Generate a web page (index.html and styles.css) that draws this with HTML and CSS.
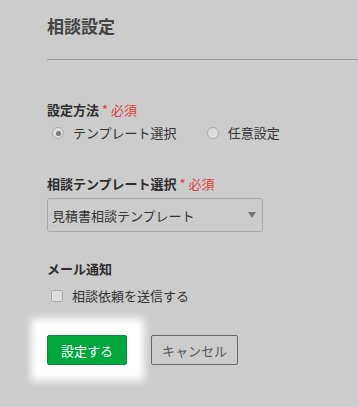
FILE: index.html
```html
<!DOCTYPE html>
<html lang="ja">
<head>
<meta charset="utf-8">
<link rel="stylesheet" href="styles.css">
</head>
<body>
<div class="page">
  <header class="header">
    <h1 class="title">相談設定</h1>
  </header>
  <form class="form">
    <div class="field field-method">
      <div class="label">設定方法 <span class="req">* 必須</span></div>
      <div class="radios">
        <label class="radio-item"><span class="radio checked"></span>テンプレート選択</label>
        <label class="radio-item"><span class="radio"></span>任意設定</label>
      </div>
    </div>
    <div class="field field-template">
      <div class="label">相談テンプレート選択 <span class="req">* 必須</span></div>
      <div class="select">
        <span class="select-text">見積書相談テンプレート</span>
        <span class="select-arrow"></span>
      </div>
    </div>
    <div class="field field-mail">
      <div class="label">メール通知</div>
      <label class="check-item"><span class="checkbox"></span>相談依頼を送信する</label>
    </div>
    <div class="actions">
      <span class="spot"><span class="btn btn-primary">設定する</span></span>
      <span class="btn btn-cancel">キャンセル</span>
    </div>
  </form>
</div>
</body>
</html>
```

FILE: styles.css
```css
html, body {
  margin: 0;
  padding: 0;
  background: #cccccc;
}
body {
  font-family: "Noto Sans CJK JP", "Noto Sans", sans-serif;
  color: #333;
  width: 358px;
  height: 407px;
  overflow: hidden;
}
.header {
  margin-left: 47px;
  height: 59px;
  border-bottom: 1px solid #999;
  box-sizing: content-box;
}
.title {
  margin: 0;
  padding-top: 14px;
  font-size: 17px;
  line-height: 24px;
  font-weight: bold;
  color: #444;
}
.form {
  padding-left: 47px;
}
.label {
  font-size: 13px;
  line-height: 18px;
  font-weight: bold;
  color: #2e2e2e;
}
.req {
  color: #e23b3b;
  font-weight: normal;
}
.field-method {
  margin-top: 41px;
}
.radios {
  display: flex;
  gap: 30px;
  margin-top: 4px;
  padding-left: 5px;
}
.radio-item, .check-item {
  display: flex;
  align-items: center;
  gap: 9px;
  font-size: 13px;
  line-height: 20px;
  color: #333;
}
.radio {
  width: 10px;
  height: 10px;
  border-radius: 50%;
  border: 1px solid #aaa;
  background: #ddd;
  display: flex;
  align-items: center;
  justify-content: center;
}
.radio.checked::after {
  content: "";
  width: 5px;
  height: 5px;
  border-radius: 50%;
  background: #777;
}
.field-template {
  margin-top: 32px;
}
.select {
  margin-top: 5px;
  width: 205px;
  height: 32px;
  border: 1px solid #aaa;
  border-radius: 3px;
  display: flex;
  align-items: center;
  justify-content: space-between;
  padding: 0 5px 0 4px;
  box-sizing: content-box;
}
.select-text {
  font-size: 13px;
  color: #333;
}
.select-arrow {
  width: 0;
  height: 0;
  border-left: 4px solid transparent;
  border-right: 4px solid transparent;
  border-top: 6px solid #777;
  margin-right: 1px;
}
.field-mail {
  margin-top: 28px;
}
.check-item {
  margin-top: 8px;
  padding-left: 4px;
}
.checkbox {
  width: 10px;
  height: 10px;
  border: 1px solid #aaa;
  border-radius: 2px;
  background: #ddd;
}
.actions {
  margin-top: 29px;
  display: flex;
  gap: 24px;
  align-items: flex-start;
}
.spot {
  position: relative;
  display: block;
}
.spot::before {
  content: "";
  position: absolute;
  left: -10px;
  right: -11px;
  top: -11px;
  bottom: -10px;
  background: #fff;
  box-shadow: 0 0 8px 6px #fff;
}
.btn {
  position: relative;
  display: flex;
  align-items: center;
  justify-content: center;
  height: 28px;
  font-size: 13px;
  box-sizing: content-box;
}
.btn-primary {
  width: 78px;
  background: #00a73c;
  border: 1px solid #0a8f35;
  border-radius: 2px;
  color: #fff;
}
.btn-cancel {
  width: 85px;
  border: 1px solid #666;
  border-radius: 2px;
  color: #555;
}
```
